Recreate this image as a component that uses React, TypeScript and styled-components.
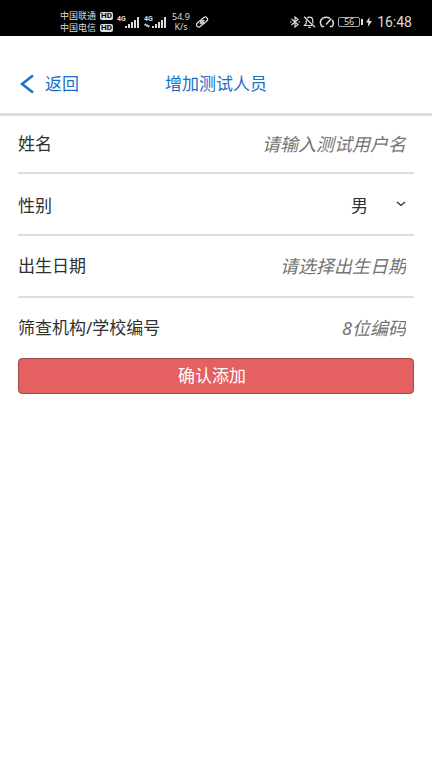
import React from "react";
import styled, { createGlobalStyle } from "styled-components";

const GlobalStyle = createGlobalStyle`
  * { box-sizing: border-box; }
  body {
    margin: 0;
    background: #fff;
    color: #303030;
    font-family: "Noto Sans", "Noto Sans CJK SC", sans-serif;
  }
  button, input, select { font: inherit; }
`;

const StatusBar = styled.div`
  display: flex;
  justify-content: space-between;
  height: 36px;
  padding: 8px 20px 0 60px;
  background: #000;
  color: #dcdcdc;
`;

const StatusGroup = styled.div<{ $gap: number }>`
  display: flex;
  align-items: center;
  gap: ${(p) => p.$gap}px;
  height: 28px;
`;

const Carriers = styled.div`
  display: flex;
  flex-direction: column;
`;

const Carrier = styled.div`
  display: flex;
  align-items: center;
  gap: 4px;
  height: 12px;
  font-size: 9px;
  line-height: 12px;
  white-space: nowrap;
`;

const HdBadge = styled.span`
  width: 13px;
  height: 8px;
  border-radius: 2px;
  background: #dcdcdc;
  color: #000;
  font-family: Roboto, sans-serif;
  font-size: 8px;
  font-weight: 700;
  line-height: 8px;
  text-align: center;
`;

const Speed = styled.div`
  width: 20px;
  font-size: 9px;
  line-height: 10px;
  text-align: center;
`;

const Clock = styled.time`
  margin-left: 2px;
  font-family: Roboto, sans-serif;
  font-size: 14px;
  line-height: 16px;
`;

const Header = styled.header`
  display: grid;
  grid-template-columns: 1fr auto 1fr;
  align-items: center;
  height: 80px;
  padding: 18px 20px 0;
  border-bottom: 3px solid #dcdcdc;
  color: #1b6fc8;
`;

const BackButton = styled.button`
  display: flex;
  align-items: center;
  justify-self: start;
  gap: 11px;
  padding: 0;
  border: 0;
  background: none;
  color: inherit;
  font-size: 17px;
  line-height: 24px;
  cursor: pointer;
`;

const Title = styled.h1`
  margin: 0;
  font-size: 17px;
  font-weight: 400;
  line-height: 24px;
`;

const Form = styled.form`
  padding: 0 18px;
`;

const Row = styled.div<{ $height: number; $top?: number; $last?: boolean }>`
  display: flex;
  align-items: center;
  justify-content: space-between;
  height: ${(p) => p.$height}px;
  padding: ${(p) => p.$top ?? 0}px 8px 0 0;
  border-bottom: ${(p) => (p.$last ? "0" : "2px solid #dcdcdc")};
  font-size: 17px;
  line-height: 24px;
`;

const Label = styled.label`
  flex: none;
`;

const TextInput = styled.input`
  flex: 1;
  min-width: 0;
  padding: 0;
  border: 0;
  outline: 0;
  background: none;
  color: #303030;
  font-size: 18px;
  line-height: 24px;
  text-align: right;
  &::placeholder {
    color: #747474;
    font-style: italic;
    opacity: 1;
  }
`;

const SelectBox = styled.div`
  display: grid;
  align-items: center;
  > * { grid-area: 1 / 1; }
  > svg { justify-self: end; margin-bottom: 4px; pointer-events: none; }
`;

const Select = styled.select`
  appearance: none;
  padding: 0 38px 0 0;
  border: 0;
  outline: 0;
  background: none;
  color: #303030;
  line-height: 24px;
`;

const SubmitButton = styled.button`
  display: block;
  width: 100%;
  height: 36px;
  padding: 0 8px 0 0;
  border: 1px solid #a34b4b;
  border-radius: 4px;
  background: #e56060;
  color: #fff;
  font-size: 17px;
  line-height: 24px;
  cursor: pointer;
`;

const NetworkTag = styled.text`
  font: 700 7px Roboto, sans-serif;
`;

function Signal({ arrows = false }: { arrows?: boolean }) {
  return (
    <svg width="23" height="14" viewBox="0 0 23 14" fill="#dcdcdc">
      <NetworkTag x="0" y="6">4G</NetworkTag>
      {arrows && <path d="M0 10l2-2v1.400h2v1h-4zM6 11l-2 2v-1.400h-2v-1h4z" />}
      <path d="M8 11h2v2H8zM11 9h2v4h-2zM14 7h2v6h-2zM17 5h2v8h-2zM20 2h2v11h-2z" />
    </svg>
  );
}

function LinkIcon() {
  return (
    <svg width="14" height="14" viewBox="0 0 14 14" fill="none" stroke="#dcdcdc" strokeWidth="1.300">
      <g transform="rotate(-40 7 7)">
        <rect x="0.500" y="4.700" width="7.500" height="4.600" rx="2.300" />
        <rect x="6" y="4.700" width="7.500" height="4.600" rx="2.300" />
        <path d="M4 7h6" />
      </g>
    </svg>
  );
}

function BluetoothIcon() {
  return (
    <svg width="10" height="14" viewBox="0 0 10 14" fill="none" stroke="#dcdcdc" strokeWidth="1.200">
      <path d="M1.500 4L8 9.500 5 12V2l3 2.500L1.500 10" />
      <path d="M0 7h1.500M8.500 7H10" />
    </svg>
  );
}

function BellOffIcon() {
  return (
    <svg width="13" height="14" viewBox="0 0 13 14" fill="none" stroke="#dcdcdc" strokeWidth="1.200">
      <path d="M4 3.200C4.600 2.500 5.500 2.200 6.500 2.200c2 0 3.300 1.500 3.300 3.500v2.800M9 10.500H1.500l1.700-2V5.200M5.300 12.300h2.400M1 1.800l11 10.500" />
    </svg>
  );
}

function GaugeIcon() {
  return (
    <svg width="16" height="14" viewBox="0 0 16 14" fill="none" stroke="#dcdcdc" strokeWidth="1.500" strokeLinecap="round">
      <path d="M3 11.500C.5 8.500 1 5 3.800 3.200 6 1.800 8.500 2 10.500 3M13.500 5.500c1.300 2.200 1 4.300-.5 6h-1.500M3 11.500h1.500M7.500 9L12 4" />
    </svg>
  );
}

const Battery = styled.div`
  display: flex;
  align-items: center;
  &::after {
    content: "";
    width: 2px;
    height: 6px;
    margin-left: 1px;
    background: #dcdcdc;
  }
`;

const BatteryLevel = styled.span`
  width: 22px;
  height: 10px;
  border: 1px solid #aaa;
  border-radius: 2px;
  font-size: 9px;
  line-height: 8px;
  text-align: center;
`;

function BoltIcon() {
  return (
    <svg width="6" height="10" viewBox="0 0 6 10" fill="#dcdcdc">
      <path d="M3.500 0L0 5.500h2.300L1.800 10 6 4H3.400z" />
    </svg>
  );
}

export default function App() {
  return (
    <>
      <GlobalStyle />
      <StatusBar>
        <StatusGroup $gap={4}>
          <Carriers>
            <Carrier>中国联通 <HdBadge>HD</HdBadge></Carrier>
            <Carrier>中国电信 <HdBadge>HD</HdBadge></Carrier>
          </Carriers>
          <Signal />
          <Signal arrows />
          <Speed>54.9 K/s</Speed>
          <LinkIcon />
        </StatusGroup>
        <StatusGroup $gap={3}>
          <BluetoothIcon />
          <BellOffIcon />
          <GaugeIcon />
          <Battery><BatteryLevel>56</BatteryLevel></Battery>
          <BoltIcon />
          <Clock>16:48</Clock>
        </StatusGroup>
      </StatusBar>
      <Header>
        <BackButton type="button">
          <svg width="14" height="20" viewBox="0 0 14 20" fill="none" stroke="currentColor" strokeWidth="2.500">
            <path d="M13 1.500L2 10l11 8.500" />
          </svg>
          返回
        </BackButton>
        <Title>增加测试人员</Title>
      </Header>
      <Form onSubmit={(e) => e.preventDefault()}>
        <Row $height={58}>
          <Label htmlFor="name">姓名</Label>
          <TextInput id="name" placeholder="请输入测试用户名" />
        </Row>
        <Row $height={62} $top={4}>
          <Label htmlFor="gender">性别</Label>
          <SelectBox>
            <Select id="gender" defaultValue="男">
              <option>男</option>
              <option>女</option>
            </Select>
            <svg width="10" height="6" viewBox="0 0 10 6" fill="none" stroke="#303030" strokeWidth="1.300">
              <path d="M1 1l4 3.500L9 1" />
            </svg>
          </SelectBox>
        </Row>
        <Row $height={62}>
          <Label htmlFor="birth">出生日期</Label>
          <TextInput id="birth" placeholder="请选择出生日期" />
        </Row>
        <Row $height={60} $last>
          <Label htmlFor="code">筛查机构/学校编号</Label>
          <TextInput id="code" placeholder="8位编码" />
        </Row>
        <SubmitButton type="submit">确认添加</SubmitButton>
      </Form>
    </>
  );
}
